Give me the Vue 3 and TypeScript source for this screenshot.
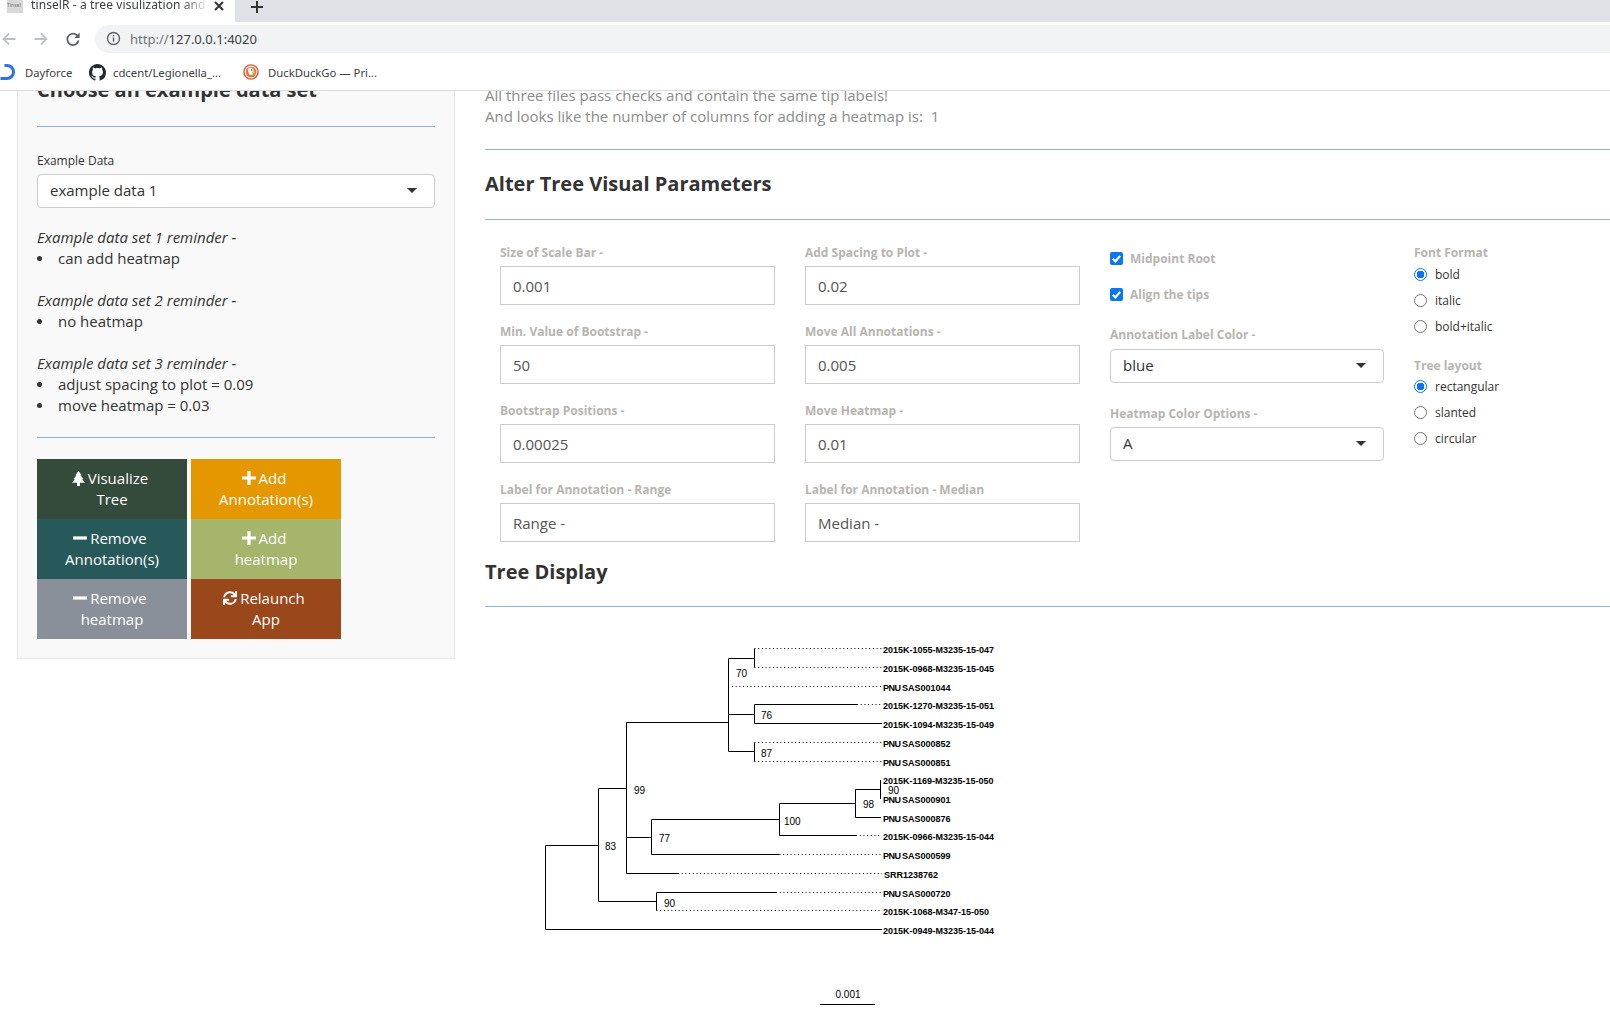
<script setup lang="ts">
type Field = { label: string; value: string };
type Tip = { y: number; name: string; prefix?: string };
type Boot = { x: number; y: number; text: string };

const fieldRows: Field[][] = [
  [
    { label: 'Size of Scale Bar -', value: '0.001' },
    { label: 'Add Spacing to Plot -', value: '0.02' },
  ],
  [
    { label: 'Min. Value of Bootstrap -', value: '50' },
    { label: 'Move All Annotations -', value: '0.005' },
  ],
  [
    { label: 'Bootstrap Positions -', value: '0.00025' },
    { label: 'Move Heatmap -', value: '0.01' },
  ],
  [
    { label: 'Label for Annotation - Range', value: 'Range -' },
    { label: 'Label for Annotation - Median', value: 'Median -' },
  ],
];

const reminders = [
  { title: 'Example data set 1 reminder -', items: ['can add heatmap'] },
  { title: 'Example data set 2 reminder -', items: ['no heatmap'] },
  { title: 'Example data set 3 reminder -', items: ['adjust spacing to plot = 0.09', 'move heatmap = 0.03'] },
];

const fontOptions = ['bold', 'italic', 'bold+italic'];
const layoutOptions = ['rectangular', 'slanted', 'circular'];

const tips: Tip[] = [
  { y: 648.5, name: '2015K-1055-M3235-15-047' },
  { y: 667.5, name: '2015K-0968-M3235-15-045' },
  { y: 686.5, prefix: 'PNU', name: 'SAS001044' },
  { y: 704.5, name: '2015K-1270-M3235-15-051' },
  { y: 723.5, name: '2015K-1094-M3235-15-049' },
  { y: 742.5, prefix: 'PNU', name: 'SAS000852' },
  { y: 761.5, prefix: 'PNU', name: 'SAS000851' },
  { y: 779, name: '2015K-1169-M3235-15-050' },
  { y: 798, prefix: 'PNU', name: 'SAS000901' },
  { y: 817.5, prefix: 'PNU', name: 'SAS000876' },
  { y: 835.5, name: '2015K-0966-M3235-15-044' },
  { y: 854.5, prefix: 'PNU', name: 'SAS000599' },
  { y: 873.5, name: 'SRR1238762' },
  { y: 892.5, prefix: 'PNU', name: 'SAS000720' },
  { y: 910.5, name: '2015K-1068-M347-15-050' },
  { y: 929.5, name: '2015K-0949-M3235-15-044' },
];

const boots: Boot[] = [
  { x: 736, y: 677, text: '70' },
  { x: 761, y: 719, text: '76' },
  { x: 761, y: 757, text: '87' },
  { x: 634, y: 794, text: '99' },
  { x: 888, y: 794, text: '90' },
  { x: 863, y: 808, text: '98' },
  { x: 784, y: 825, text: '100' },
  { x: 659, y: 842, text: '77' },
  { x: 605, y: 850, text: '83' },
  { x: 664, y: 907, text: '90' },
];

// solid branches of the tree, in page coordinates
const solid = [
  'M545.5 845.5V929.5H882',
  'M545.5 845.5H598.5',
  'M598.5 788.5V901.5',
  'M598.5 788.5H626.5',
  'M626.5 722.5V873.5H678',
  'M626.5 722.5H728.5',
  'M728.5 658.5V751.5',
  'M728.5 658.5H754.5',
  'M754.5 648.5V667.5',
  'M728.5 714.5H754.5',
  'M754.5 704.5V723.5H882',
  'M754.5 704.5H857',
  'M728.5 751.5H754.5',
  'M754.5 742.5V761.5',
  'M626.5 837.5H651.5',
  'M651.5 819.5V854.5H779.5',
  'M651.5 819.5H779.5',
  'M779.5 803.5V835.5H856',
  'M779.5 803.5H855.5',
  'M855.5 789.5V817.5H881',
  'M855.5 789.5H880.5',
  'M880.5 780V799',
  'M598.5 901.5H656.5',
  'M656.5 892.5V910.5',
  'M656.5 892.5H776',
];

// dotted parts, drawn from where the solid part stops up to the tip label
const dotted = [
  'M754.5 648.5H882',
  'M754.5 667.5H882',
  'M732 686.5H882',
  'M857 704.5H882',
  'M754.5 742.5H882',
  'M754.5 761.5H882',
  'M856 835.5H882',
  'M779.5 854.5H882',
  'M678 873.5H882',
  'M776 892.5H882',
  'M656.5 910.5H882',
];
</script>

<template>
  <div class="window">
    <header class="chrome">
      <div class="tabstrip">
        <div class="tab">
          <span class="favicon">Tinsel</span>
          <span class="tab-title">tinselR - a tree visulization and an</span>
          <svg class="tab-close" viewBox="0 0 12 12"><path d="M2 2L10 10M10 2L2 10" /></svg>
        </div>
        <div class="strip-rest">
          <svg class="new-tab" viewBox="0 0 14 14"><path d="M7 1V13M1 7H13" /></svg>
        </div>
      </div>
      <div class="toolbar">
        <svg class="nav off" viewBox="0 0 16 16"><path d="M14.5 8H2.5M8 2.5L2.5 8L8 13.5" /></svg>
        <svg class="nav off" viewBox="0 0 16 16"><path d="M1.5 8H13.5M8 2.5L13.5 8L8 13.5" /></svg>
        <svg class="nav" viewBox="0 0 16 16">
          <path d="M13.4 6.4A5.7 5.7 0 1 0 13.6 9.5" />
          <path class="fill" d="M14.6 1.6V7H9.2Z" />
        </svg>
        <div class="omnibox">
          <svg class="info" viewBox="0 0 16 16">
            <circle cx="8" cy="8" r="6.4" />
            <path d="M8 7V11.5M8 4.2V5.8" />
          </svg>
          <span class="url"><span class="scheme">http://</span>127.0.0.1:4020</span>
        </div>
      </div>
      <div class="bookmarks">
        <span class="mark first">
          <svg class="dayforce" viewBox="0 0 16 16"><path d="M4 1.5H6.5A6.5 6.5 0 0 1 6.5 14.5H0" /></svg>
          Dayforce
        </span>
        <span class="mark second">
          <svg class="github" viewBox="0 0 16 16">
            <path d="M8 0C3.58 0 0 3.58 0 8c0 3.54 2.29 6.53 5.47 7.59.4.07.55-.17.55-.38 0-.19-.01-.82-.01-1.49-2.01.37-2.53-.49-2.69-.94-.09-.23-.48-.94-.82-1.13-.28-.15-.68-.52-.01-.53.63-.01 1.08.58 1.23.82.72 1.21 1.87.87 2.33.66.07-.52.28-.87.51-1.07-1.78-.2-3.64-.89-3.64-3.95 0-.87.31-1.59.82-2.15-.08-.2-.36-1.02.08-2.12 0 0 .67-.21 2.2.82.64-.18 1.32-.27 2-.27s1.36.09 2 .27c1.53-1.04 2.2-.82 2.2-.82.44 1.1.16 1.92.08 2.12.51.56.82 1.27.82 2.15 0 3.07-1.87 3.75-3.65 3.95.29.25.54.73.54 1.48 0 1.07-.01 1.93-.01 2.2 0 .21.15.46.55.38A8.01 8.01 0 0 0 16 8c0-4.42-3.58-8-8-8z" />
          </svg>
          cdcent/Legionella_...
        </span>
        <span class="mark third">
          <svg class="duck" viewBox="0 0 16 16">
            <circle cx="8" cy="8" r="7.8" fill="#de5833" />
            <circle cx="8" cy="8" r="6.4" fill="#fff" />
            <circle cx="8" cy="8" r="5.4" fill="#e8734d" />
            <path d="M5 5.4C5.6 3.4 9.4 3.2 10.2 5.4C10.8 7 10.6 9 9.8 10.4L7 11C5.8 9.4 4.8 7.4 5 5.4Z" fill="#fff" />
            <circle cx="8.6" cy="6" r=".8" fill="#2d4f8e" />
            <path d="M8.4 8.2L12 7.4V9.4L8.8 9.6Z" fill="#f5c518" />
            <path d="M7.6 11.2L10.8 10.6V12.4L8 12.8Z" fill="#65bc46" />
          </svg>
          DuckDuckGo — Pri...
        </span>
      </div>
    </header>

    <div class="viewport">
      <aside class="panel">
        <h3 class="panel-title">Choose an example data set</h3>
        <hr class="rule panel-rule" />
        <label class="small-label">Example Data</label>
        <div class="select panel-select">
          <span>example data 1</span>
          <i class="caret"></i>
        </div>
        <div class="reminders">
          <div v-for="r in reminders" :key="r.title" class="reminder">
            <em>{{ r.title }}</em>
            <ul>
              <li v-for="item in r.items" :key="item">{{ item }}</li>
            </ul>
          </div>
        </div>
        <hr class="rule second-rule" />
        <div class="buttons">
          <div class="btn tree">
            <span class="btn-top">
              <svg class="ico tall" viewBox="0 0 14 16"><path d="M7 0L10.5 4.5H9L12.5 8.5H11L14 12.5H8.5V16H5.5V12.5H0L3 8.5H1.5L5 4.5H3.5Z" /></svg>
              Visualize
            </span>
            <span>Tree</span>
          </div>
          <div class="btn orange">
            <span class="btn-top"><svg class="ico" viewBox="0 0 14 14"><path d="M5.4 0H8.6V5.4H14V8.6H8.6V14H5.4V8.6H0V5.4H5.4Z" /></svg> Add</span>
            <span>Annotation(s)</span>
          </div>
          <div class="btn teal">
            <span class="btn-top"><svg class="ico" viewBox="0 0 14 14"><rect y="5.4" width="14" height="3.2" /></svg> Remove</span>
            <span>Annotation(s)</span>
          </div>
          <div class="btn sage">
            <span class="btn-top"><svg class="ico" viewBox="0 0 14 14"><path d="M5.4 0H8.6V5.4H14V8.6H8.6V14H5.4V8.6H0V5.4H5.4Z" /></svg> Add</span>
            <span>heatmap</span>
          </div>
          <div class="btn grey">
            <span class="btn-top"><svg class="ico" viewBox="0 0 14 14"><rect y="5.4" width="14" height="3.2" /></svg> Remove</span>
            <span>heatmap</span>
          </div>
          <div class="btn brown">
            <span class="btn-top">
              <svg class="ico" viewBox="0 0 512 512"><path d="M440.65 12.57l4 82.77A247.16 247.16 0 0 0 255.83 8C134.73 8 33.91 94.92 12.29 209.82A12 12 0 0 0 24.09 224h49.05a12 12 0 0 0 11.67-9.26 175.91 175.91 0 0 1 317-56.94l-101.46-4.86a12 12 0 0 0-12.57 12v47.41a12 12 0 0 0 12 12H500a12 12 0 0 0 12-12V12a12 12 0 0 0-12-12h-47.37a12 12 0 0 0-11.98 12.57zM255.83 432a175.61 175.61 0 0 1-146-77.8l101.8 4.87a12 12 0 0 0 12.57-12v-47.4a12 12 0 0 0-12-12H12a12 12 0 0 0-12 12V500a12 12 0 0 0 12 12h47.35a12 12 0 0 0 12-12.6l-4.15-82.57A247.17 247.17 0 0 0 255.83 504c121.11 0 221.93-86.92 243.55-201.82a12 12 0 0 0-11.8-14.18h-49.05a12 12 0 0 0-11.67 9.26A175.86 175.86 0 0 1 255.83 432z" /></svg>
              Relaunch
            </span>
            <span>App</span>
          </div>
        </div>
      </aside>

      <main class="content">
        <p class="status">All three files pass checks and contain the same tip labels!</p>
        <p class="status">And looks like the number of columns for adding a heatmap is:&nbsp; 1</p>
        <hr class="rule status-rule" />
        <h3 class="section-title params-title">Alter Tree Visual Parameters</h3>
        <hr class="rule" />

        <div class="params">
          <div class="field-grid">
            <template v-for="(row, i) in fieldRows" :key="i">
              <div v-for="f in row" :key="f.label" class="field">
                <label class="field-label">{{ f.label }}</label>
                <div class="input">{{ f.value }}</div>
              </div>
            </template>
          </div>

          <div class="options">
            <div class="check first-check">
              <span class="box"><svg viewBox="0 0 12 12"><path d="M2.6 6.2L5 8.6L9.4 3.6" /></svg></span>
              <span class="field-label">Midpoint Root</span>
            </div>
            <div class="check">
              <span class="box"><svg viewBox="0 0 12 12"><path d="M2.6 6.2L5 8.6L9.4 3.6" /></svg></span>
              <span class="field-label">Align the tips</span>
            </div>
            <label class="field-label color-label">Annotation Label Color -</label>
            <div class="select">
              <span>blue</span>
              <i class="caret"></i>
            </div>
            <label class="field-label heat-label">Heatmap Color Options -</label>
            <div class="select">
              <span>A</span>
              <i class="caret"></i>
            </div>
          </div>

          <div class="radios">
            <label class="field-label font-label">Font Format</label>
            <div v-for="(o, i) in fontOptions" :key="o" class="radio">
              <span class="dot" :class="{ on: i === 0 }"></span>{{ o }}
            </div>
            <label class="field-label layout-label">Tree layout</label>
            <div v-for="(o, i) in layoutOptions" :key="o" class="radio">
              <span class="dot" :class="{ on: i === 0 }"></span>{{ o }}
            </div>
          </div>
        </div>

        <h3 class="section-title tree-title">Tree Display</h3>
        <hr class="rule" />

        <svg class="tree-plot" viewBox="530 608 560 405" width="560" height="405">
          <path v-for="d in solid" :key="d" :d="d" class="branch" />
          <path v-for="d in dotted" :key="d" :d="d" class="branch dots" />
          <text v-for="t in tips" :key="t.y" :x="t.name.startsWith('SRR') ? 884 : 883" :y="t.y + 4.5" class="tip">
            <template v-if="t.prefix"><tspan class="pnu">{{ t.prefix }}</tspan><tspan dx="1.5">{{ t.name }}</tspan></template>
            <template v-else>{{ t.name }}</template>
          </text>
          <text v-for="b in boots" :key="b.x + '-' + b.y" :x="b.x" :y="b.y" class="boot">{{ b.text }}</text>
          <text x="848" y="998" class="scale-text">0.001</text>
          <path d="M820 1004.5H875" class="branch" />
        </svg>
      </main>
    </div>
  </div>
</template>

<style>
html,
body {
  margin: 0;
  background: #fff;
  overflow: hidden;
}
</style>

<style scoped>
.window {
  width: 1610px;
  height: 1013px;
  display: flex;
  flex-direction: column;
  overflow: hidden;
  font-family: "Open Sans", "Noto Sans", sans-serif;
  color: #333;
}

.chrome {
  flex: none;
  height: 91px;
  border-bottom: 1px solid #dadce0;
  box-sizing: border-box;
  font-family: "Noto Sans", "Open Sans", sans-serif;
  background: #fff;
  z-index: 2;
}

.tabstrip {
  display: flex;
  height: 22px;
  background: #dee1e6;
}

.tab {
  width: 235px;
  display: flex;
  align-items: flex-start;
  background: #fff;
  padding-left: 7px;
  box-sizing: border-box;
}

.favicon {
  width: 16px;
  height: 13px;
  background: #d8d8d8;
  color: #777;
  font-size: 5px;
  line-height: 10px;
  overflow: hidden;
  white-space: nowrap;
  flex: none;
}

.tab-title {
  width: 178px;
  margin-left: 8px;
  font-size: 12px;
  line-height: 10px;
  letter-spacing: 0.1px;
  color: #3c4043;
  white-space: nowrap;
  overflow: hidden;
  -webkit-mask-image: linear-gradient(90deg, #000 85%, transparent);
  mask-image: linear-gradient(90deg, #000 85%, transparent);
}

.tab-close {
  width: 12px;
  height: 12px;
  margin: 0 0 0 4px;
  fill: none;
  stroke: #333;
  stroke-width: 2;
}

.strip-rest {
  flex: 1;
  position: relative;
  background: #dee1e6;
  border-bottom-left-radius: 8px;
}

.new-tab {
  width: 14px;
  height: 14px;
  margin-left: 15px;
  display: block;
  fill: none;
  stroke: #333;
  stroke-width: 2;
}

.toolbar {
  height: 33px;
  display: flex;
  align-items: center;
  padding-left: 1px;
  background: #fff;
}

.nav {
  width: 16px;
  height: 16px;
  margin-right: 16px;
  fill: none;
  stroke: #5f6368;
  stroke-width: 1.8;
  flex: none;
}

.nav.off {
  stroke: #bdc1c6;
}

.nav .fill {
  fill: #5f6368;
  stroke: none;
}

.omnibox {
  flex: 1;
  height: 28px;
  margin-left: -2px;
  margin-right: -20px;
  border-radius: 14px;
  background: #f1f3f4;
  display: flex;
  align-items: center;
  padding-left: 11px;
}

.info {
  width: 15px;
  height: 15px;
  fill: none;
  stroke: #5f6368;
  stroke-width: 1.5;
}

.url {
  margin-left: 9px;
  font-size: 13px;
  color: #3c4043;
}

.scheme {
  color: #70757a;
}

.bookmarks {
  height: 35px;
  box-sizing: border-box;
  padding-bottom: 1px;
  display: flex;
  align-items: center;
  font-size: 11.3px;
  color: #3c4043;
  background: #fff;
}

.mark {
  display: flex;
  align-items: center;
  white-space: nowrap;
}

.first {
  width: 89px;
  margin-left: 0;
}

.second {
  width: 154px;
}

.dayforce {
  width: 17px;
  height: 16px;
  margin-right: 8px;
  fill: none;
  stroke: #2f6fed;
  stroke-width: 3;
}

.github {
  width: 17px;
  height: 17px;
  margin-right: 7px;
  fill: #24292e;
}

.duck {
  width: 16px;
  height: 16px;
  margin-right: 9px;
}

.viewport {
  flex: 1;
  min-height: 0;
  display: flex;
  align-items: flex-start;
  overflow: hidden;
}

.panel {
  flex: none;
  width: 438px;
  box-sizing: border-box;
  height: 601px;
  margin: -33px 0 0 17px;
  padding: 19px 19px 0;
  background: #f9f9f9;
  border: 1px solid #e8e8e8;
}

.panel-title {
  margin: 0;
  font-size: 20px;
  line-height: 24px;
  font-weight: 700;
  color: #333;
}

.rule {
  margin: 0;
  border: 0;
  border-top: 1px solid #8fb1dc;
}

.panel-rule {
  margin-top: 24px;
}

.small-label {
  display: block;
  margin-top: 25px;
  font-size: 12px;
  line-height: 18px;
}

.select {
  height: 34px;
  box-sizing: border-box;
  border: 1px solid #ccc;
  border-radius: 4px;
  background: #fff;
  display: flex;
  align-items: center;
  justify-content: space-between;
  padding: 0 17px 2px 12px;
  font-size: 15px;
  color: #333;
}

.panel-select {
  margin-top: 4px;
}

.caret {
  width: 0;
  height: 0;
  border: 5px solid transparent;
  border-top: 5px solid #333;
  border-bottom: 0;
  margin-top: 0;
}

.reminders {
  margin-top: 19px;
}

.reminder {
  font-size: 15px;
  line-height: 21px;
  margin-bottom: 21px;
}

.reminder ul {
  margin: 0;
  padding: 0;
  list-style: none;
}

.reminder li {
  display: flex;
  align-items: center;
  gap: 16px;
}

.reminder li::before {
  content: "";
  width: 5px;
  height: 5px;
  border-radius: 50%;
  background: #333;
  flex: none;
}

.second-rule {
  margin-top: 0;
}

.buttons {
  display: grid;
  grid-template-columns: 150px 150px;
  column-gap: 4px;
  grid-auto-rows: 60px;
  margin-top: 21px;
}

.btn {
  display: flex;
  flex-direction: column;
  align-items: center;
  justify-content: center;
  font-size: 15px;
  line-height: 21px;
  color: #fff;
}

.btn-top {
  padding-right: 4px;
}

.ico {
  width: 14px;
  height: 14px;
  margin-right: -1px;
  fill: #fff;
  vertical-align: -1px;
}

.ico.tall {
  height: 15px;
  width: 13px;
  vertical-align: -2px;
}

.tree { background: #344a3a; }
.orange { background: #e59700; }
.teal { background: #27595b; }
.sage { background: #a5b56b; }
.grey { background: #8a9099; }
.brown { background: #9b471c; }

.content {
  flex: 1;
  min-width: 0;
  margin-left: 30px;
  margin-top: -6px;
}

.status {
  margin: 0;
  font-size: 15px;
  line-height: 21px;
  color: #8c8c8c;
}

.status-rule {
  margin-top: 22px;
}

.section-title {
  margin: 0;
  font-size: 20px;
  line-height: 24px;
  font-weight: 700;
  color: #333;
}

.params-title {
  margin-top: 22px;
  margin-bottom: 23px;
}

.params {
  display: flex;
  padding: 24px 0 0 15px;
}

.field-grid {
  width: 579px;
  display: grid;
  grid-template-columns: 275px 275px;
  column-gap: 30px;
  grid-auto-rows: 79px;
  flex: none;
}

.field-label {
  display: block;
  font-size: 12px;
  line-height: 18px;
  font-weight: 700;
  color: #b8b4b0;
}

.input {
  height: 39px;
  box-sizing: border-box;
  margin-top: 4px;
  border: 1px solid #ccc;
  background: #fff;
  display: flex;
  align-items: center;
  padding-left: 12px;
  font-size: 15px;
  color: #555;
}

.options {
  width: 274px;
  flex: none;
  margin-left: 31px;
}

.check {
  display: flex;
  align-items: center;
  gap: 7px;
  height: 18px;
  margin-bottom: 18px;
}

.first-check {
  margin-top: 6px;
}

.box {
  width: 13px;
  height: 13px;
  margin-bottom: 1px;
  border-radius: 2px;
  background: #0a76f6;
  display: block;
}

.box svg {
  display: block;
  width: 13px;
  height: 13px;
  fill: none;
  stroke: #fff;
  stroke-width: 2;
}

.color-label {
  margin-top: 22px;
  margin-bottom: 5px;
}

.heat-label {
  margin-top: 22px;
  margin-bottom: 4px;
}

.radios {
  flex: none;
  margin-left: 30px;
}

.font-label {
  margin-bottom: -1px;
}

.radio {
  display: flex;
  align-items: center;
  height: 26px;
  font-size: 12px;
  color: #333;
}

.dot {
  width: 13px;
  height: 13px;
  box-sizing: border-box;
  border-radius: 50%;
  border: 1px solid #767676;
  margin-right: 8px;
  background: #fff;
}

.dot.on {
  border: 1.5px solid #0a76f6;
  background: radial-gradient(circle, #0a76f6 0 3.6px, #fff 4px);
}

.layout-label {
  margin-top: 18px;
  margin-bottom: -2px;
}

.tree-title {
  margin-top: 0;
  margin-bottom: 22px;
}

.tree-plot {
  display: block;
  margin-left: 45px;
  margin-top: 1px;
}

.branch {
  fill: none;
  stroke: #000;
  stroke-width: 1;
}

.dots {
  stroke-dasharray: 1 2.7;
}

.tip {
  font-family: "Liberation Sans", Arial, sans-serif;
  font-size: 9px;
  font-weight: 700;
  fill: #000;
}

.pnu {
  letter-spacing: -0.5px;
}

.boot {
  font-family: "Liberation Sans", Arial, sans-serif;
  font-size: 10px;
  fill: #000;
}

.scale-text {
  font-family: "Liberation Sans", Arial, sans-serif;
  font-size: 10px;
  fill: #000;
  text-anchor: middle;
}
</style>
